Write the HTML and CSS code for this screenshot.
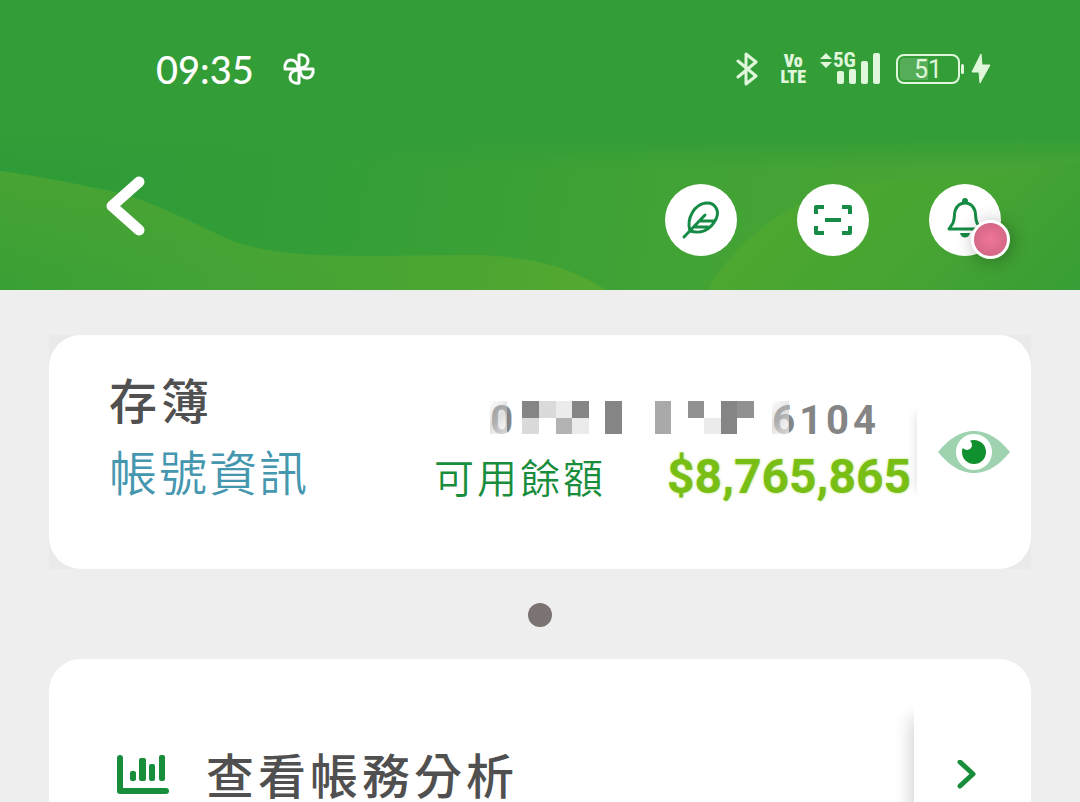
FILE: index.html
```html
<!DOCTYPE html>
<html lang="zh-Hant">
<head>
<meta charset="utf-8">
<meta name="viewport" content="width=device-width, initial-scale=1">
<title>存簿</title>
<link rel="stylesheet" href="styles.css">
</head>
<body>
<header class="header">
  <svg class="header-art" viewBox="0 0 1080 290" preserveAspectRatio="none" aria-hidden="true">
    <defs>
      <linearGradient id="base" gradientUnits="userSpaceOnUse" x1="0" y1="140" x2="900" y2="290"><stop offset="0" stop-color="#2e9b38"/><stop offset=".35" stop-color="#339e37"/><stop offset=".7" stop-color="#40a235"/><stop offset="1" stop-color="#48a434"/></linearGradient>
      <linearGradient id="left" gradientUnits="userSpaceOnUse" x1="0" y1="290" x2="600" y2="250"><stop offset="0" stop-color="#3aa035"/><stop offset=".35" stop-color="#43a335"/><stop offset=".75" stop-color="#4ba532"/><stop offset="1" stop-color="#54a930"/></linearGradient>
      <linearGradient id="edge" x1="0" y1="0" x2="0" y2="1"><stop offset="0" stop-color="#4ba433" stop-opacity=".8"/><stop offset=".9" stop-color="#4ba433" stop-opacity="0"/></linearGradient>
      <linearGradient id="right" gradientUnits="userSpaceOnUse" x1="800" y1="180" x2="1000" y2="380"><stop offset="0" stop-color="#4da730"/><stop offset=".5" stop-color="#46a433"/><stop offset="1" stop-color="#369d35"/></linearGradient>
      <linearGradient id="top" x1="0" y1="0" x2="0" y2="1"><stop offset="0" stop-color="#339d38"/><stop offset=".8" stop-color="#339d38"/><stop offset="1" stop-color="#339d38" stop-opacity="0"/></linearGradient>
    </defs>
    <rect width="1080" height="290" fill="url(#base)"/>
    <path d="M708 290C730 250 770 215 820 195C870 176 960 180 1080 163V290Z" fill="url(#right)"/>
    <path d="M0 171C40 176 80 185 115 192C155 202 190 222 230 240C290 263 390 254 475 255C540 257 575 270 606 290H0Z" fill="url(#left)"/>
    <path d="M0 171C40 176 80 185 115 192C155 202 190 222 230 240C290 263 390 254 475 255C540 257 575 270 606 290H0Z" fill="url(#edge)"/>
    <rect width="1080" height="170" fill="url(#top)"/>
  </svg>
  <div class="status">
    <time class="clock">09:35</time>
    <svg class="pinwheel" width="34" height="34" viewBox="-17 -17 34 34" aria-hidden="true">
      <g fill="none" stroke="#fff" stroke-width="3" stroke-linejoin="round">
        <path d="M0 0V-14C5 -15 9 -12 9 -8C9 -4 6 -1 0 -1"/>
        <path d="M0 0V-14C5 -15 9 -12 9 -8C9 -4 6 -1 0 -1" transform="rotate(90)"/>
        <path d="M0 0V-14C5 -15 9 -12 9 -8C9 -4 6 -1 0 -1" transform="rotate(180)"/>
        <path d="M0 0V-14C5 -15 9 -12 9 -8C9 -4 6 -1 0 -1" transform="rotate(270)"/>
      </g>
    </svg>
    <div class="signals">
      <svg width="22" height="34" viewBox="0 0 22 34" role="img" aria-label="Bluetooth"><path d="M2 9L20 24L10 32V2L20 10L2 25" fill="none" stroke="#e0f7dc" stroke-width="3" stroke-linejoin="round" stroke-linecap="round"/></svg>
      <span class="volte">Vo<br>LTE</span>
      <div class="cell">
        <svg width="62" height="34" viewBox="0 0 62 34" aria-hidden="true">
          <g fill="#e0f7dc"><path d="M0 7L6 1L12 7ZM0 10H12L6 16Z"/><rect x="17" y="19" width="7" height="13" rx="2"/><rect x="29" y="17" width="7" height="15" rx="2"/><rect x="41" y="9" width="7" height="23" rx="2"/><rect x="53" y="1" width="7" height="31" rx="2"/></g>
        </svg>
        <span class="network">5G</span>
      </div>
      <span class="battery"><span class="battery-level">51</span></span>
      <svg width="20" height="32" viewBox="0 0 20 32" aria-hidden="true"><path d="M10 1L1 19H8L9 30L19 12H11Z" fill="#e0f7dc" stroke="#e0f7dc" stroke-linejoin="round"/></svg>
    </div>
  </div>
  <nav class="nav">
    <button class="back" type="button" aria-label="返回"><svg width="40" height="62" viewBox="0 0 40 62"><path d="M34 6L7 30L34 54" fill="none" stroke="#fff" stroke-width="11" stroke-linecap="round" stroke-linejoin="round"/></svg></button>
    <div class="actions">
      <button class="round" type="button" aria-label="外觀"><svg width="40" height="40" viewBox="0 0 40 40"><g fill="none" stroke="#168b45" stroke-width="3" stroke-linecap="round" stroke-linejoin="round"><path d="M3 37L24 15M9 31C5 18 14 4 25 3C34 2 39 11 35 19C29 31 19 34 9 31ZM19 21H33M13 27H27"/></g></svg></button>
      <button class="round" type="button" aria-label="掃描"><svg width="40" height="34" viewBox="0 0 40 34"><path d="M3 11V4H11M29 4H37V11M37 23V30H29M11 30H3V23M12 17H28" fill="none" stroke="#168b45" stroke-width="4" stroke-linejoin="round"/></svg></button>
      <button class="round" type="button" aria-label="通知"><svg width="36" height="42" viewBox="0 0 36 42"><path d="M2 32H34L30 26C28 21 29 18 28 14C26 8 22 6 18 6C14 6 10 8 8 14C7 18 8 21 6 26Z" fill="none" stroke="#168b45" stroke-width="3" stroke-linejoin="round"/><circle cx="18" cy="4" r="3" fill="#168b45"/><path d="M13 36H23C22 42 14 42 13 36Z" fill="#168b45"/></svg><span class="badge"></span></button>
    </div>
  </nav>
</header>
<main class="main">
  <div class="card-frame">
    <section class="card account">
      <div class="account-names">
        <h1 class="title">存簿</h1>
        <a class="info" href="#">帳號資訊</a>
      </div>
      <div class="balance">
        <div class="number">
          <span class="veiled">0</span>
          <svg class="mask" width="255" height="34" viewBox="6 0 255 34" aria-hidden="true" shape-rendering="crispEdges">
            <path d="M11 0h17v17H11zM61 0h17v17H61zM94 0h17v33H94zM210 0h16v33H210z" fill="#858585"/>
            <path d="M177 0h16v17H177zM226 0h17v17H226z" fill="#919191"/>
            <path d="M144 0h16v33H144z" fill="#a9a9a9"/><path d="M45 17h16v16H45z" fill="#b3b3b3"/>
            <path d="M28 0h17v17H28zM11 17h17v16H11z" fill="#dadada"/><path d="M45 0h16v17H45zM61 17h17v16H61zM193 17h17v16H193z" fill="#ebebeb"/>
          </svg>
          <span class="veiled">6</span><span>104</span>
        </div>
        <div class="available"><span class="available-label">可用餘額</span><strong class="amount">$8,765,865</strong></div>
      </div>
      <button class="reveal" type="button" aria-label="顯示餘額"><svg width="72" height="44" viewBox="0 0 72 44"><path d="M0 22C14 5 26 1 36 1C46 1 58 5 72 22C58 39 46 43 36 43C26 43 14 39 0 22Z" fill="#9fd3af"/><circle cx="36" cy="22" r="18" fill="#fff"/><circle cx="36" cy="22" r="12" fill="#10902f"/><circle cx="29" cy="15" r="5" fill="#fff"/></svg></button>
    </section>
  </div>
  <span class="page-dot"></span>
  <section class="card analysis">
    <svg width="52" height="42" viewBox="0 0 52 42" aria-hidden="true"><path d="M3 3V36H49" fill="none" stroke="#188d3b" stroke-width="6" stroke-linecap="round" stroke-linejoin="round"/><g fill="#188d3b"><rect x="13" y="16" width="6" height="10" rx="2"/><rect x="22" y="3" width="7" height="23" rx="2"/><rect x="32" y="9" width="6" height="17" rx="2"/><rect x="42" y="0" width="6" height="26" rx="2"/></g></svg>
    <h2 class="analysis-title">查看帳務分析</h2>
    <button class="open" type="button" aria-label="查看帳務分析"><svg width="22" height="32" viewBox="0 0 22 32"><path d="M5 2L18 14L5 26" fill="none" stroke="#188d3b" stroke-width="5" stroke-linecap="round" stroke-linejoin="round"/></svg></button>
  </section>
</main>
</body>
</html>
```

FILE: styles.css
```css
* { box-sizing: border-box; }

body {
  display: flex;
  flex-direction: column;
  margin: 0;
  height: 100vh;
  overflow: hidden;
  background: #eee;
  color: #505050;
  font-family: Roboto, "Noto Sans CJK TC", sans-serif;
}

button {
  margin: 0;
  padding: 0;
  border: 0;
  background: none;
  cursor: pointer;
}

svg { display: block; flex: none; }
h1, h2 { margin: 0; }

.header {
  position: relative;
  flex: none;
  padding-bottom: 34px;
  background: #339d38;
}

.header-art {
  position: absolute;
  inset: 0;
  width: 100%;
  height: 100%;
}

.status {
  position: relative;
  display: flex;
  align-items: center;
  height: 138px;
  padding: 0 89px 0 156px;
}

.clock {
  color: #fff;
  font: 500 38px/40px Lato, sans-serif;
}

.pinwheel { margin-left: 28px; }

.signals {
  display: flex;
  align-items: center;
  margin-left: auto;
  color: #e0f7dc;
}

.volte {
  margin: 0 14px 0 22px;
  font: 900 18px/16px "Roboto Condensed", "Liberation Sans Narrow", sans-serif;
  text-align: center;
}

.cell { position: relative; }

.network {
  position: absolute;
  top: -3px;
  left: 13px;
  font: 700 21px/22px "Roboto Condensed", "Liberation Sans Narrow", sans-serif;
}

.battery {
  position: relative;
  width: 64px;
  height: 30px;
  margin: 0 11px 0 14px;
  padding: 2px;
  border: 2px solid #e0f7dc;
  border-radius: 8px;
}

.battery::after {
  content: "";
  position: absolute;
  top: 8px;
  right: -6px;
  width: 3px;
  height: 10px;
  border-radius: 2px;
  background: #e0f7dc;
}

.battery-level {
  display: block;
  border-radius: 4px;
  background: linear-gradient(90deg, #55ad58 50%, transparent 50%);
  font-size: 25px;
  line-height: 24px;
  height: 22px;
  text-align: center;
}

.nav {
  position: relative;
  display: flex;
  justify-content: space-between;
  margin-top: 38px;
  padding: 0 79px 0 105px;
}

.back { align-self: flex-start; }

.actions {
  display: flex;
  gap: 60px;
  padding-top: 8px;
}

.round {
  position: relative;
  display: flex;
  align-items: center;
  justify-content: center;
  width: 72px;
  height: 72px;
  border-radius: 50%;
  background: #fff;
}

.round:last-child { padding-bottom: 4px; }

.badge {
  position: absolute;
  right: -9px;
  bottom: -3px;
  width: 39px;
  height: 39px;
  border: 3px solid #fff;
  border-radius: 50%;
  background: radial-gradient(#f0759a, #c9627e);
  box-shadow: 2px 2px 18px rgba(0, 0, 0, .3);
}

.main {
  display: flex;
  flex: 1;
  flex-direction: column;
  min-height: 0;
  padding: 45px 49px 0;
}

.card-frame {
  flex: none;
  background: #eaeaea;
}

.card {
  display: flex;
  flex: none;
  min-height: 234px;
  padding-left: 60px;
  border-radius: 32px;
  background: #fff;
}

.account-names {
  display: flex;
  flex-direction: column;
  padding: 32px 0 58px;
  font-size: 48px;
  line-height: 72px;
}

.title {
  font-size: 48px;
  font-weight: 500;
  letter-spacing: 4px;
}

.info {
  color: #4597b0;
  font-weight: 350;
  letter-spacing: 2px;
  text-decoration: none;
}

.balance {
  display: flex;
  flex-direction: column;
  align-items: flex-end;
  margin-left: auto;
  padding-top: 57px;
}

.number {
  display: flex;
  align-items: center;
  padding-right: 31px;
  color: #858585;
  font-size: 40px;
  font-weight: 700;
  line-height: 58px;
  letter-spacing: 4px;
}

.mask { margin-bottom: 6px; }

.veiled { position: relative; }

.veiled::after {
  content: "";
  position: absolute;
  top: 9px;
  left: 0;
  width: 17px;
  height: 33px;
  background: linear-gradient(135deg, rgba(255, 255, 255, .2), rgba(200, 200, 200, .6) 50%, rgba(255, 255, 255, .7));
}

.available {
  display: flex;
  align-items: center;
  gap: 61px;
  line-height: 48px;
}

.available-label {
  padding-top: 6px;
  color: #188d3b;
  font-size: 40px;
  font-weight: 350;
  letter-spacing: 3px;
}

.amount {
  color: #78be14;
  font-size: 48px;
  text-shadow: 0 0 3px #b9de7b;
}

.reveal,
.open {
  display: flex;
  align-items: center;
  justify-content: center;
  align-self: center;
  background: #fff;
}

.reveal {
  width: 114px;
  height: 92px;
  margin-left: 6px;
  box-shadow: -8px 0 10px -8px rgba(0, 0, 0, .15);
}

.page-dot {
  flex: none;
  align-self: center;
  width: 24px;
  height: 24px;
  margin: 34px 0 32px;
  border-radius: 50%;
  background: #7a7371;
}

.analysis {
  align-items: center;
  padding-left: 68px;
}

.analysis-title {
  margin-left: 37px;
  padding-top: 4px;
  font-size: 48px;
  font-weight: 500;
  line-height: 72px;
  letter-spacing: 4px;
}

.open {
  width: 117px;
  height: 148px;
  margin-left: auto;
  padding-right: 14px;
  box-shadow: -14px 4px 18px -12px rgba(0, 0, 0, .2);
}
```
